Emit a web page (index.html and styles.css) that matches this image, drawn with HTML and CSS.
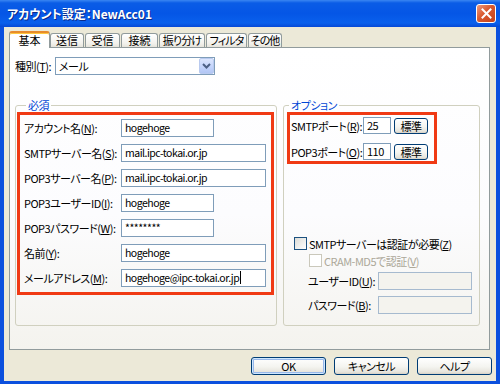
FILE: index.html
```html
<!DOCTYPE html>
<html lang="ja">
<head>
<meta charset="utf-8">
<title>アカウント設定</title>
<link rel="stylesheet" href="styles.css">
</head>
<body>
<div class="window">
  <div class="titlebar">
    <span class="title">アカウント設定：NewAcc01</span>
    <span class="close"><svg width="11" height="11" viewBox="0 0 11 11"><path d="M1.5 1.5 L9.5 9.5 M9.5 1.5 L1.5 9.5" stroke="#fff" stroke-width="2" stroke-linecap="square"/></svg></span>
  </div>
  <div class="frame">
    <div class="client">
      <div class="tabs">
        <div class="tab active t-basic">基本</div>
        <div class="tab t-send">送信</div>
        <div class="tab t-recv">受信</div>
        <div class="tab t-conn">接続</div>
        <div class="tab t-sort">振り分け</div>
        <div class="tab t-filter">フィルタ</div>
        <div class="tab t-other">その他</div>
      </div>
      <div class="panel">
        <div class="kind-row">
          <span class="kind-label">種別(<u>T</u>):</span>
          <div class="select">
            <span>メール</span>
            <span class="drop"><svg width="9" height="6" viewBox="0 0 9 6"><path d="M1 1 L4.5 4.5 L8 1" fill="none" stroke="#4D6185" stroke-width="2"/></svg></span>
          </div>
        </div>
        <div class="groups">
          <fieldset class="group group-main">
            <legend>必須</legend>
            <div class="hl hl-main">
              <div class="row"><span class="rlabel">アカウント名(<u>N</u>):</span><span class="field w-s">hogehoge</span></div>
              <div class="row"><span class="rlabel">SMTPサーバー名(<u>S</u>):</span><span class="field w-l">mail.ipc-tokai.or.jp</span></div>
              <div class="row"><span class="rlabel">POP3サーバー名(<u>P</u>):</span><span class="field w-l">mail.ipc-tokai.or.jp</span></div>
              <div class="row"><span class="rlabel">POP3ユーザーID(<u>I</u>):</span><span class="field w-s">hogehoge</span></div>
              <div class="row"><span class="rlabel">POP3パスワード(<u>W</u>):</span><span class="field w-s">********</span></div>
              <div class="row"><span class="rlabel">名前(<u>Y</u>):</span><span class="field w-l">hogehoge</span></div>
              <div class="row"><span class="rlabel">メールアドレス(<u>M</u>):</span><span class="field w-l">hogehoge@ipc-tokai.or.jp<span class="caret"></span></span></div>
            </div>
          </fieldset>
          <fieldset class="group group-opt">
            <legend>オプション</legend>
            <div class="hl hl-opt">
              <div class="orow"><span class="olabel">SMTPポート(<u>R</u>):</span><span class="field port">25</span><span class="btn std">標準</span></div>
              <div class="orow"><span class="olabel">POP3ポート(<u>O</u>):</span><span class="field port">110</span><span class="btn std">標準</span></div>
            </div>
            <div class="check-row auth"><span class="box"></span><span>SMTPサーバーは認証が必要(<u>Z</u>)</span></div>
            <div class="check-row cram"><span class="box dis"></span><span>CRAM-MD5で認証(<u>V</u>)</span></div>
            <div class="arow user"><span class="alabel">ユーザーID(<u>U</u>):</span><span class="dfield"></span></div>
            <div class="arow pass"><span class="alabel">パスワード(<u>B</u>):</span><span class="dfield"></span></div>
          </fieldset>
        </div>
      </div>
      <div class="buttons">
        <span class="btn big default">OK</span>
        <span class="btn big">キャンセル</span>
        <span class="btn big">ヘルプ</span>
      </div>
    </div>
  </div>
</div>
</body>
</html>
```

FILE: styles.css
```css
* { box-sizing: border-box; }
html, body { margin: 0; padding: 0; }
body {
  width: 500px;
  height: 384px;
  overflow: hidden;
  font-family: "Noto Sans CJK JP", "Noto Sans", sans-serif;
  font-size: 11px;
  letter-spacing: -0.5px;
  font-feature-settings: "palt";
  color: #000;
  background: #ECE9D8;
}
u { text-decoration: underline; text-underline-offset: 1px; }

.window {
  width: 500px;
  height: 384px;
  display: flex;
  flex-direction: column;
}

.titlebar {
  height: 27px;
  flex: none;
  display: flex;
  justify-content: space-between;
  align-items: flex-start;
  padding: 4px 4px 0 7px;
  background: linear-gradient(#3A86F2 0, #0A5CE6 3px, #0556E6 50%, #0A60EC 85%, #0649D6 100%);
}
.title {
  color: #fff;
  font-weight: bold;
  font-size: 12px;
  letter-spacing: 0;
  line-height: 19px;
  text-shadow: 1px 1px 0 #0A2A8A;
}
.close {
  width: 20px;
  height: 19px;
  border: 1px solid #fff;
  border-radius: 3px;
  background: linear-gradient(135deg, #EE9A7E 0%, #D9592F 45%, #C5421B 100%);
  display: flex;
  align-items: center;
  justify-content: center;
}
.close svg { display: block; }

.frame {
  flex: 1;
  display: flex;
  border: 4px solid #0B50DE;
  border-top: 0;
  border-bottom-width: 3px;
}
.client {
  flex: 1;
  display: flex;
  flex-direction: column;
  background: #ECE9D8;
  padding: 0 6px 6px 5px;
}

.tabs {
  height: 20px;
  flex: none;
  display: flex;
  align-items: flex-end;
}
.tab {
  height: 14px;
  line-height: 13px;
  padding: 0;
  text-align: center;
  margin-right: 1px;
  border: 1px solid #919B9C;
  border-bottom: 0;
  border-radius: 3px 3px 0 0;
  background: linear-gradient(#FFFFFF, #F3F2ED 70%, #E6E4DB);
  white-space: nowrap;
  letter-spacing: -0.9px;
}
.tab.active {
  position: relative;
  z-index: 1;
  height: 17px;
  line-height: 14px;
  margin-bottom: -1px;
  margin-right: 0;
  background: #fff;
  border-top: 2px solid #E68B2C;
  box-shadow: inset 0 1px 0 #FFC73C;
  letter-spacing: 0;
}
.t-basic { width: 41px; }
.t-send { width: 34px; letter-spacing: 0; }
.t-recv { width: 35px; letter-spacing: 0; }
.t-conn { width: 37px; letter-spacing: 0; }
.t-sort { width: 46px; }
.t-filter { width: 41px; }
.t-other { width: 34px; }

.panel {
  flex: 1;
  display: flex;
  flex-direction: column;
  border: 1px solid #919B9C;
  background: linear-gradient(#FFFFFF 0%, #FCFCFE 55%, #F4F3EE 100%);
  padding: 9px 0 0 5px;
}

.kind-row {
  display: flex;
  align-items: center;
  height: 18px;
}
.kind-label { width: 40px; flex: none; white-space: nowrap; }
.select {
  width: 160px;
  height: 18px;
  border: 1px solid #7F9DB9;
  background: #fff;
  display: flex;
  align-items: center;
  justify-content: space-between;
  padding-left: 3px;
}
.drop {
  width: 15px;
  height: 16px;
  border: 1px solid #B9CAEF;
  border-radius: 2px;
  background: linear-gradient(#DCE6FD, #C2D3FB 60%, #B2C6F4);
  display: flex;
  align-items: center;
  justify-content: center;
}
.drop svg { display: block; }

.groups {
  display: flex;
  gap: 6px;
  margin-top: 24px;
}
.group {
  margin: 0;
  min-width: 0;
  border: 1px solid #D0D0BF;
  border-radius: 3px;
}
.group legend {
  color: #0046D5;
  font-size: 11px;
  line-height: 13px;
  padding: 0 2px;
}
.group-main {
  width: 262px;
  padding: 0 2px 30px 1px;
}
.group-main legend { margin-left: 9px; }
.group-opt {
  width: 197px;
  padding: 0 2px 11px 3px;
}
.group-opt legend { margin-left: 2px; }

.hl { border: 3px solid #F03A14; }
.hl-main {
  width: 257px;
  padding: 4px 0 5px 4px;
  display: flex;
  flex-direction: column;
  gap: 7px;
}
.row {
  display: flex;
  align-items: center;
  height: 18px;
}
.rlabel { width: 97px; flex: none; white-space: nowrap; }
.field {
  height: 18px;
  border: 1px solid #7F9DB9;
  background: #fff;
  padding-left: 3px;
  font-size: 10.5px;
  line-height: 16px;
  white-space: nowrap;
  flex: none;
}
.w-s { width: 93px; }
.w-l { width: 145px; }
.caret {
  display: inline-block;
  width: 1px;
  height: 13px;
  background: #000;
  vertical-align: -2px;
  margin-left: 1px;
}

.hl-opt {
  width: 150px;
  padding: 2px 0 1px 1px;
  display: flex;
  flex-direction: column;
  gap: 9px;
}
.orow {
  display: flex;
  align-items: center;
  height: 17px;
}
.olabel { width: 72px; flex: none; white-space: nowrap; }
.port { width: 28px; height: 17px; line-height: 15px; font-size: 11px; }

.btn {
  border: 1px solid #003C74;
  border-radius: 3px;
  background: linear-gradient(#FFFFFF, #F4F4F0 55%, #E6E4DC 88%, #D6D0C5);
  display: flex;
  align-items: center;
  justify-content: center;
  white-space: nowrap;
  flex: none;
}
.std {
  width: 34px;
  height: 16px;
  margin-left: 3px;
  line-height: 14px;
}

.check-row {
  display: flex;
  align-items: center;
  height: 13px;
  white-space: nowrap;
}
.box {
  width: 13px;
  height: 13px;
  flex: none;
  border: 1px solid #1C5180;
  background: linear-gradient(135deg, #DCDCD7, #FFFFFF);
  margin-right: 2px;
}
.box.dis { border-color: #CAC8BB; background: #fff; }
.auth { margin-top: 73px; margin-left: 7px; }
.cram { margin-top: 4px; margin-left: 22px; color: #ACA899; }

.arow {
  display: flex;
  align-items: center;
  height: 18px;
  margin-left: 21px;
}
.arow.user { margin-top: 5px; }
.arow.pass { margin-top: 6px; }
.alabel { width: 70px; flex: none; white-space: nowrap; }
.dfield {
  width: 94px;
  height: 18px;
  border: 1px solid #A6BACF;
  background: #F4F3EE;
}

.buttons {
  display: flex;
  justify-content: flex-end;
  gap: 8px;
  margin-top: 7px;
  margin-right: -2px;
  height: 18px;
}
.big { width: 75px; height: 18px; }
.default { box-shadow: inset 0 0 0 1px #CEE7FF, inset 0 0 0 2px #98B8EA; }
```
